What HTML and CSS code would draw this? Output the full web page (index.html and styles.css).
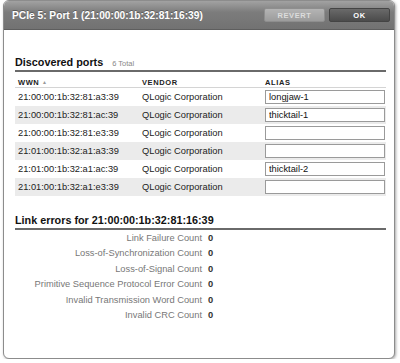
FILE: index.html
```html
<!DOCTYPE html>
<html lang="en">
<head>
  <meta charset="UTF-8">
  <title>PCIe 5: Port 1</title>
  <link rel="stylesheet" href="styles.css">
</head>
<body>
  <div class="dialog">
    <div class="titlebar">
      <span class="title">PCIe 5: Port 1 (21:00:00:1b:32:81:16:39)</span>
      <div class="actions">
        <button class="btn btn-revert">REVERT</button>
        <button class="btn btn-ok">OK</button>
      </div>
    </div>

    <div class="content">
      <div class="section-head">
        <h2>Discovered ports</h2>
        <span class="count">6 Total</span>
      </div>
      <table class="ports">
        <thead>
          <tr>
            <th class="col-wwn">WWN <span class="sort">&#9650;</span></th>
            <th class="col-vendor">VENDOR</th>
            <th>ALIAS</th>
          </tr>
        </thead>
        <tbody>
          <tr>
            <td>21:00:00:1b:32:81:a3:39</td>
            <td>QLogic Corporation</td>
            <td><input type="text" value="longjaw-1"></td>
          </tr>
          <tr>
            <td>21:00:00:1b:32:81:ac:39</td>
            <td>QLogic Corporation</td>
            <td><input type="text" value="thicktail-1"></td>
          </tr>
          <tr>
            <td>21:00:00:1b:32:81:e3:39</td>
            <td>QLogic Corporation</td>
            <td><input type="text" value=""></td>
          </tr>
          <tr>
            <td>21:01:00:1b:32:a1:a3:39</td>
            <td>QLogic Corporation</td>
            <td><input type="text" value=""></td>
          </tr>
          <tr>
            <td>21:01:00:1b:32:a1:ac:39</td>
            <td>QLogic Corporation</td>
            <td><input type="text" value="thicktail-2"></td>
          </tr>
          <tr>
            <td>21:01:00:1b:32:a1:e3:39</td>
            <td>QLogic Corporation</td>
            <td><input type="text" value=""></td>
          </tr>
        </tbody>
      </table>

      <div class="section-head errors-head">
        <h2>Link errors for 21:00:00:1b:32:81:16:39</h2>
      </div>
      <div class="stats">
        <span class="label">Link Failure Count</span><span class="value">0</span>
        <span class="label">Loss-of-Synchronization Count</span><span class="value">0</span>
        <span class="label">Loss-of-Signal Count</span><span class="value">0</span>
        <span class="label">Primitive Sequence Protocol Error Count</span><span class="value">0</span>
        <span class="label">Invalid Transmission Word Count</span><span class="value">0</span>
        <span class="label">Invalid CRC Count</span><span class="value">0</span>
      </div>
    </div>
  </div>
</body>
</html>
```

FILE: styles.css
```css
body {
  margin: 0;
  background-color: #fff;
  font-family: "Liberation Sans", Arial, sans-serif;
}

.dialog {
  margin: 0 3px 0 3px;
  width: 392px;
  height: 359px;
  border: 1px solid #8c8c8c;
  border-radius: 6px;
  background-color: #fff;
  box-shadow: 1px 1px 3px rgba(0, 0, 0, 0.35);
  overflow: hidden;
  box-sizing: border-box;
}

.titlebar {
  display: flex;
  align-items: center;
  justify-content: space-between;
  height: 28px;
  padding: 0 4px 0 8px;
  background: linear-gradient(#a2a2a2, #7c7c7c 40%, #727272);
  border-bottom: 1px solid #5e5e5e;
}

.title {
  color: #fff;
  font-weight: bold;
  font-size: 10.2px;
  text-shadow: 0 -1px 0 rgba(0, 0, 0, 0.3);
}

.actions {
  display: flex;
  gap: 4px;
}

.btn {
  width: 61px;
  height: 14px;
  padding: 0;
  border: 1px solid #6c6c6c;
  border-radius: 2px;
  font-family: inherit;
  font-size: 7.5px;
  font-weight: bold;
  letter-spacing: 0.6px;
  cursor: pointer;
}

.btn-revert {
  background: linear-gradient(#b4b4b4, #9c9c9c);
  border-color: #8e8e8e;
  color: #dcdcdc;
}

.btn-ok {
  background: linear-gradient(#6a6a6a, #4b4b4b);
  border-color: #444;
  color: #fff;
}

.content {
  padding: 0 8px 0 11px;
}

.section-head {
  display: flex;
  align-items: baseline;
  gap: 9px;
  margin-top: 26px;
  padding-bottom: 2px;
  border-bottom: 2px solid #6a6a6a;
}

h2 {
  margin: 0;
  font-size: 10.8px;
  font-weight: bold;
  color: #111;
}

.count {
  font-size: 7.5px;
  color: #888;
}

.ports {
  width: 100%;
  margin-top: 3px;
  border-collapse: collapse;
  font-size: 9.3px;
  color: #222;
}

.ports th {
  height: 12px;
  padding: 0 0 0 3px;
  border-bottom: 1px solid #d4d4d4;
  text-align: left;
  vertical-align: bottom;
  font-size: 7.5px;
  letter-spacing: 0.6px;
  color: #222;
}

.sort {
  font-size: 5px;
  color: #999;
  vertical-align: 1px;
}

.col-wwn {
  width: 121px;
}

.col-vendor {
  width: 120px;
}

.ports td {
  height: 18px;
  padding: 0 0 0 3px;
}

.ports tbody tr:nth-child(even) {
  background-color: #ebebeb;
}

.ports input {
  width: 120px;
  height: 14px;
  margin: 0;
  padding: 0 3px;
  border: 1px solid #9a9a9a;
  box-sizing: border-box;
  font-family: inherit;
  font-size: 9.3px;
  color: #111;
  background-color: #fff;
  display: block;
}

.errors-head {
  margin-top: 18px;
}

.stats {
  display: grid;
  grid-template-columns: 187px auto;
  column-gap: 6px;
  margin-top: 1px;
  font-size: 9.3px;
  line-height: 15.4px;
}

.label {
  text-align: right;
  color: #777;
}

.value {
  font-weight: bold;
  color: #333;
}
```
